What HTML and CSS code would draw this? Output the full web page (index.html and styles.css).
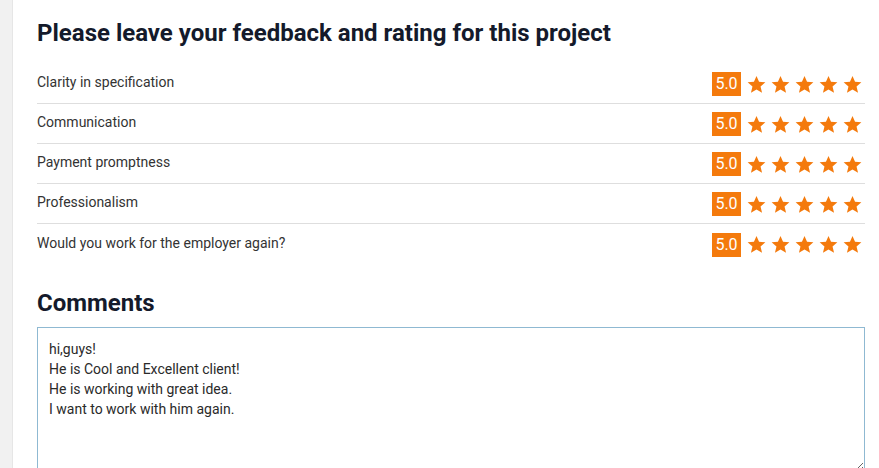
FILE: index.html
```html
<!DOCTYPE html>
<html>
<head>
<meta charset="utf-8">
<link rel="stylesheet" href="styles.css">
</head>
<body>
<div class="page">
  <aside class="side"></aside>
  <main class="main">
    <h2 class="title">Please leave your feedback and rating for this project</h2>
    <div class="rows">
      <div class="row"><span class="label">Clarity in specification</span><div class="rating"><span class="badge">5.0</span><span class="stars"></span></div></div>
      <div class="row"><span class="label">Communication</span><div class="rating"><span class="badge">5.0</span><span class="stars"></span></div></div>
      <div class="row"><span class="label">Payment promptness</span><div class="rating"><span class="badge">5.0</span><span class="stars"></span></div></div>
      <div class="row"><span class="label">Professionalism</span><div class="rating"><span class="badge">5.0</span><span class="stars"></span></div></div>
      <div class="row"><span class="label">Would you work for the employer again?</span><div class="rating"><span class="badge">5.0</span><span class="stars"></span></div></div>
    </div>
    <h2 class="title comments-title">Comments</h2>
    <textarea class="comments">hi,guys!
He is Cool and Excellent client!
He is working with great idea.
I want to work with him again.</textarea>
  </main>
</div>
<script>
  var star = '<svg class="star" viewBox="0 0 24 24" width="19" height="19"><path d="M12 1.2l3.2 7.4 8 .7-6.1 5.3 1.9 7.9L12 18.3l-7 4.2 1.9-7.9L.8 9.3l8-.7z" fill="#f47a0c"/></svg>';
  document.querySelectorAll('.stars').forEach(function (s) { s.innerHTML = star + star + star + star + star; });
</script>
</body>
</html>
```

FILE: styles.css
```css
* { box-sizing: border-box; }
html, body { margin: 0; padding: 0; background: #fff; }
body { font-family: Roboto, "Liberation Sans", sans-serif; color: #333; }
.page { display: flex; min-height: 468px; }
.side { width: 13px; flex: none; background: #f1f1f1; border-right: 1px solid #e6e6e6; }
.main { flex: 1; padding: 0 14px 0 24px; }
.title {
  margin: 0;
  padding-top: 18px;
  font-size: 24px;
  line-height: 30px;
  font-weight: 700;
  color: #141a2b;
}
.rows { margin-top: 16px; }
.row {
  display: flex;
  align-items: center;
  justify-content: space-between;
  height: 40px;
  border-bottom: 1px solid #dedede;
}
.row:last-child { border-bottom: none; }
.label { font-size: 14px; color: #333; margin-top: -3px; }
.rating { display: flex; align-items: center; gap: 6px; margin-right: 3px; margin-top: 1px; }
.badge {
  background: #f47a0c;
  color: #fff;
  font-size: 16px;
  width: 29px;
  height: 24px;
  line-height: 24px;
  text-align: center;
}
.stars { display: flex; gap: 5px; }
.star { display: block; }
.comments-title { padding-top: 24px; }
.comments {
  display: block;
  width: 100%;
  height: 145px;
  margin-top: 9px;
  border: 1px solid #8fb9d2;
  padding: 11px 11px 10px;
  font-family: Roboto, "Liberation Sans", sans-serif;
  font-size: 14px;
  line-height: 20px;
  color: #2a2a2a;
  resize: vertical;
  outline: none;
}
```
